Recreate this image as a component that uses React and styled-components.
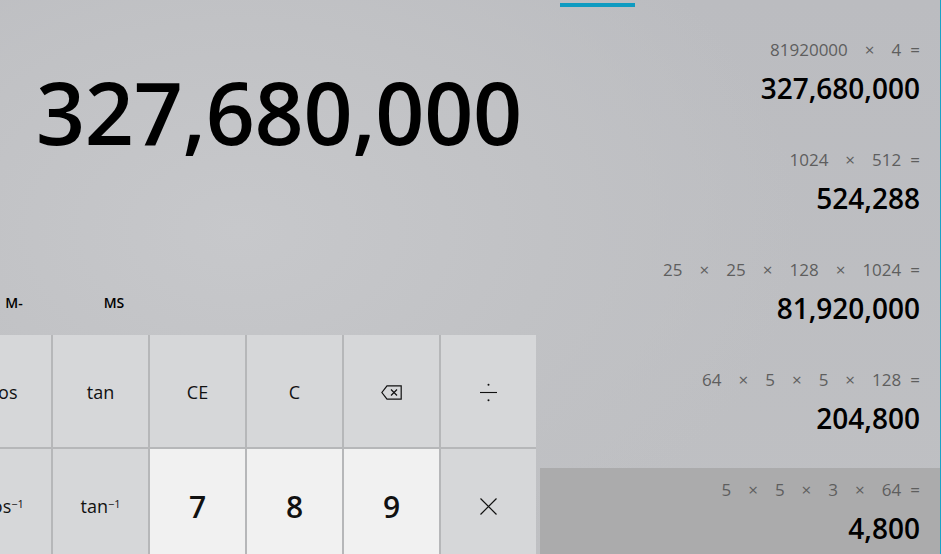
import React from "react"
import styled, { createGlobalStyle } from "styled-components"

const GlobalStyle = createGlobalStyle`
  html, body {
    margin: 0;
    padding: 0;
  }
  body {
    font-family: "Open Sans", "Noto Sans", sans-serif;
    color: #000;
  }
`

const Window = styled.div`
  width: 941px;
  height: 554px;
  overflow: hidden;
  display: flex;
  background:
    radial-gradient(ellipse 560px 380px at 240px 230px, #c7c8cb 0%, #c1c2c5 55%, rgba(188, 189, 193, 0) 100%),
    linear-gradient(180deg, #bbbcc0 0%, #bfc0c3 100%);
`

const LeftPane = styled.div`
  width: 540px;
  flex: none;
  display: flex;
  flex-direction: column;
`

const Display = styled.div`
  flex: none;
  height: 277px;
  box-sizing: border-box;
  padding: 69px 18px 0 0;
  text-align: right;
  font-size: 86px;
  font-weight: 600;
  line-height: 86px;
  letter-spacing: -0.3px;
`

const MemoryRow = styled.div`
  flex: none;
  height: 50px;
  display: flex;
  margin-left: -36px;
`

const MemoryButton = styled.div`
  width: 100px;
  display: flex;
  align-items: center;
  justify-content: center;
  font-size: 14px;
  font-weight: 600;
`

const Keypad = styled.div`
  flex: none;
  margin-top: 8px;
  margin-left: -44px;
  display: grid;
  grid-template-columns: repeat(6, 95px);
  grid-auto-rows: 112px;
  gap: 2px;
  background: #b6b7b9;
  width: max-content;
`

const Key = styled.div`
  display: flex;
  align-items: center;
  justify-content: center;
  padding-top: 2px;
  background: ${(p) => (p.$number ? "#f1f1f1" : "#d6d7d9")};
  font-size: ${(p) => (p.$number ? "30px" : "18px")};
  font-weight: ${(p) => (p.$number ? 600 : 400)};
  color: #111;

  sup {
    font-size: 11px;
    line-height: 0;
    position: relative;
    top: -2px;
  }
`

const HistoryPane = styled.div`
  width: 400px;
  flex: none;
  border-right: 1px solid #1aa0c6;
  display: flex;
  flex-direction: column;
`

const TabIndicator = styled.div`
  flex: none;
  width: 75px;
  height: 4px;
  margin: 3px 0 0 20px;
  background: #0f9bc1;
`

const HistoryList = styled.div`
  flex: none;
  margin-top: 21px;
  display: flex;
  flex-direction: column;
`

const HistoryItem = styled.div`
  height: 110px;
  flex: none;
  box-sizing: border-box;
  padding: 10px 20px 0 0;
  background: ${(p) => (p.$active ? "#ababac" : "transparent")};
`

const Expression = styled.div`
  display: flex;
  justify-content: flex-end;
  gap: 9px;
  font-size: 17px;
  line-height: 24px;
  color: #5e5e5e;
`

const Operator = styled.span`
  margin: 0 8px;
`

const Result = styled.div`
  margin-top: 8px;
  text-align: right;
  font-size: 28px;
  font-weight: 600;
  line-height: 36px;
`

const BackspaceIcon = () => (
  <svg width="21" height="15" viewBox="0 0 21 15" fill="none" stroke="#111" strokeWidth="1.2">
    <path d="M6 0.8 H20.2 V14.2 H6 L0.9 7.5 Z" />
    <path d="M10 4.5 L16 10.5 M16 4.5 L10 10.5" />
  </svg>
)

const DivideIcon = () => (
  <svg width="19" height="19" viewBox="0 0 19 19" fill="#111" stroke="#111">
    <line x1="1" y1="9.5" x2="18" y2="9.5" strokeWidth="1.1" />
    <circle cx="9.5" cy="1.8" r="1" stroke="none" />
    <circle cx="9.5" cy="17.2" r="1" stroke="none" />
  </svg>
)

const TimesIcon = () => (
  <svg width="17" height="17" viewBox="0 0 17 17" stroke="#111" strokeWidth="1.2">
    <path d="M0.5 0.5 L16.5 16.5 M16.5 0.5 L0.5 16.5" />
  </svg>
)

const history = [
  { expr: ["81920000", "×", "4"], result: "327,680,000" },
  { expr: ["1024", "×", "512"], result: "524,288" },
  { expr: ["25", "×", "25", "×", "128", "×", "1024"], result: "81,920,000" },
  { expr: ["64", "×", "5", "×", "5", "×", "128"], result: "204,800" },
  { expr: ["5", "×", "5", "×", "3", "×", "64"], result: "4,800", active: true },
]

const keys = [
  { label: "cos" },
  { label: "tan" },
  { label: "CE" },
  { label: "C" },
  { label: <BackspaceIcon /> },
  { label: <DivideIcon /> },
  { label: <>cos<sup>−1</sup></> },
  { label: <>tan<sup>−1</sup></> },
  { label: "7", number: true },
  { label: "8", number: true },
  { label: "9", number: true },
  { label: <TimesIcon /> },
]

const App = () => {
  return (
    <>
      <GlobalStyle />
      <Window>
        <LeftPane>
          <Display>327,680,000</Display>
          <MemoryRow>
            <MemoryButton>M-</MemoryButton>
            <MemoryButton>MS</MemoryButton>
          </MemoryRow>
          <Keypad>
            {keys.map((k, i) => (
              <Key key={i} $number={k.number}>
                {k.label}
              </Key>
            ))}
          </Keypad>
        </LeftPane>

        <HistoryPane>
          <TabIndicator />
          <HistoryList>
            {history.map((item, i) => (
              <HistoryItem key={i} $active={item.active}>
                <Expression>
                  {item.expr.map((t, j) =>
                    t === "×" ? <Operator key={j}>×</Operator> : <span key={j}>{t}</span>
                  )}
                  <span>=</span>
                </Expression>
                <Result>{item.result}</Result>
              </HistoryItem>
            ))}
          </HistoryList>
        </HistoryPane>
      </Window>
    </>
  )
}

export default App
